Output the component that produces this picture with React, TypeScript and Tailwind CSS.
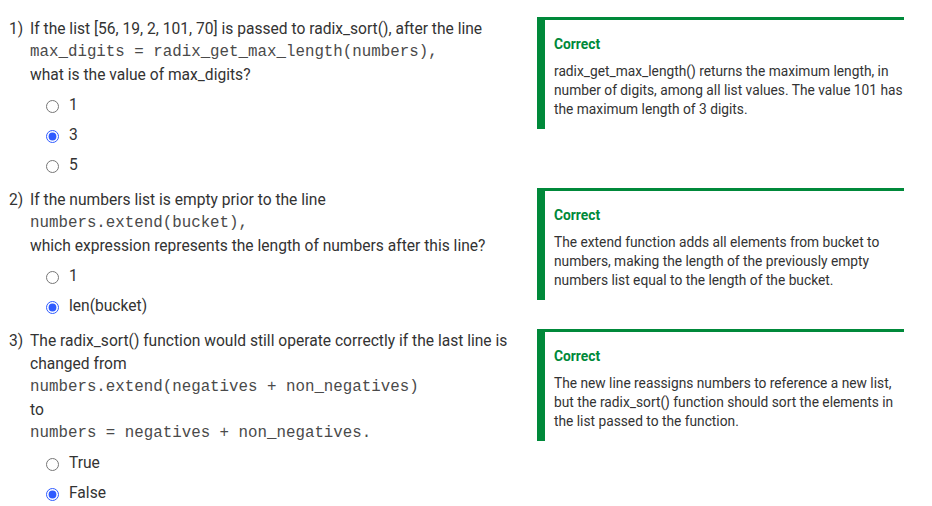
const green = "#00893a";

type Part = { code?: boolean; text: string };

type Question = {
  num: string;
  lines: Part[];
  options: string[];
  picked: number;
  feedback: string;
};

const questions: Question[] = [
  {
    num: "1)",
    lines: [
      { text: "If the list [56, 19, 2, 101, 70] is passed to radix_sort(), after the line" },
      { code: true, text: "max_digits = radix_get_max_length(numbers)," },
      { text: "what is the value of max_digits?" },
    ],
    options: ["1", "3", "5"],
    picked: 1,
    feedback:
      "radix_get_max_length() returns the maximum length, in number of digits, among all list values. The value 101 has the maximum length of 3 digits.",
  },
  {
    num: "2)",
    lines: [
      { text: "If the numbers list is empty prior to the line" },
      { code: true, text: "numbers.extend(bucket)," },
      { text: "which expression represents the length of numbers after this line?" },
    ],
    options: ["1", "len(bucket)"],
    picked: 1,
    feedback:
      "The extend function adds all elements from bucket to numbers, making the length of the previously empty numbers list equal to the length of the bucket.",
  },
  {
    num: "3)",
    lines: [
      { text: "The radix_sort() function would still operate correctly if the last line is changed from" },
      { code: true, text: "numbers.extend(negatives + non_negatives)" },
      { text: "to" },
      { code: true, text: "numbers = negatives + non_negatives." },
    ],
    options: ["True", "False"],
    picked: 1,
    feedback:
      "The new line reassigns numbers to reference a new list, but the radix_sort() function should sort the elements in the list passed to the function.",
  },
];

function Feedback({ text }: { text: string }) {
  return (
    <div
      className="self-start -mt-[1px] w-[367px] border-t-[3px] border-l-[8px] pl-[9px] pt-[14px] pb-[10px]"
      style={{ borderColor: green }}
    >
      <div className="text-[13.8px] leading-[20px] font-bold" style={{ color: green }}>
        Correct
      </div>
      <p className="mt-[8px] text-[13.75px] leading-[19px] text-[#333]">{text}</p>
    </div>
  );
}

function QuestionRow({ q }: { q: Question }) {
  return (
    <div className="flex mb-[8px]">
      <div className="w-[537px] flex pl-[9px] shrink-0">
        <div className="w-[21px] text-[15.6px] leading-[23px] text-[#333]">{q.num}</div>
        <div className="w-[495px]">
          {q.lines.map((l, i) =>
            l.code ? (
              <div
                key={i}
                className="font-['Liberation_Mono',monospace] text-[15.8px] leading-[23px] text-[#4a4a4a] whitespace-pre"
              >
                {l.text}
              </div>
            ) : (
              <div key={i} className="text-[15.6px] leading-[23px] text-[#333]">
                {l.text}
              </div>
            )
          )}
          <div className="mt-[4px]">
            {q.options.map((o, i) => (
              <label key={i} className="flex items-center h-[30px] pl-[16px]">
                <input
                  type="radio"
                  name={q.num}
                  defaultChecked={i === q.picked}
                  className="m-0 w-[13px] h-[13px] accent-[#2f5bff]"
                />
                <span className="ml-[10px] text-[15.6px] text-[#333]">{o}</span>
              </label>
            ))}
          </div>
        </div>
      </div>
      <Feedback text={q.feedback} />
    </div>
  );
}

export default function App() {
  return (
    <div className="w-[932px] h-[506px] bg-white pt-[18px] font-['Roboto',sans-serif] overflow-hidden">
      {questions.map((q) => (
        <QuestionRow key={q.num} q={q} />
      ))}
    </div>
  );
}
